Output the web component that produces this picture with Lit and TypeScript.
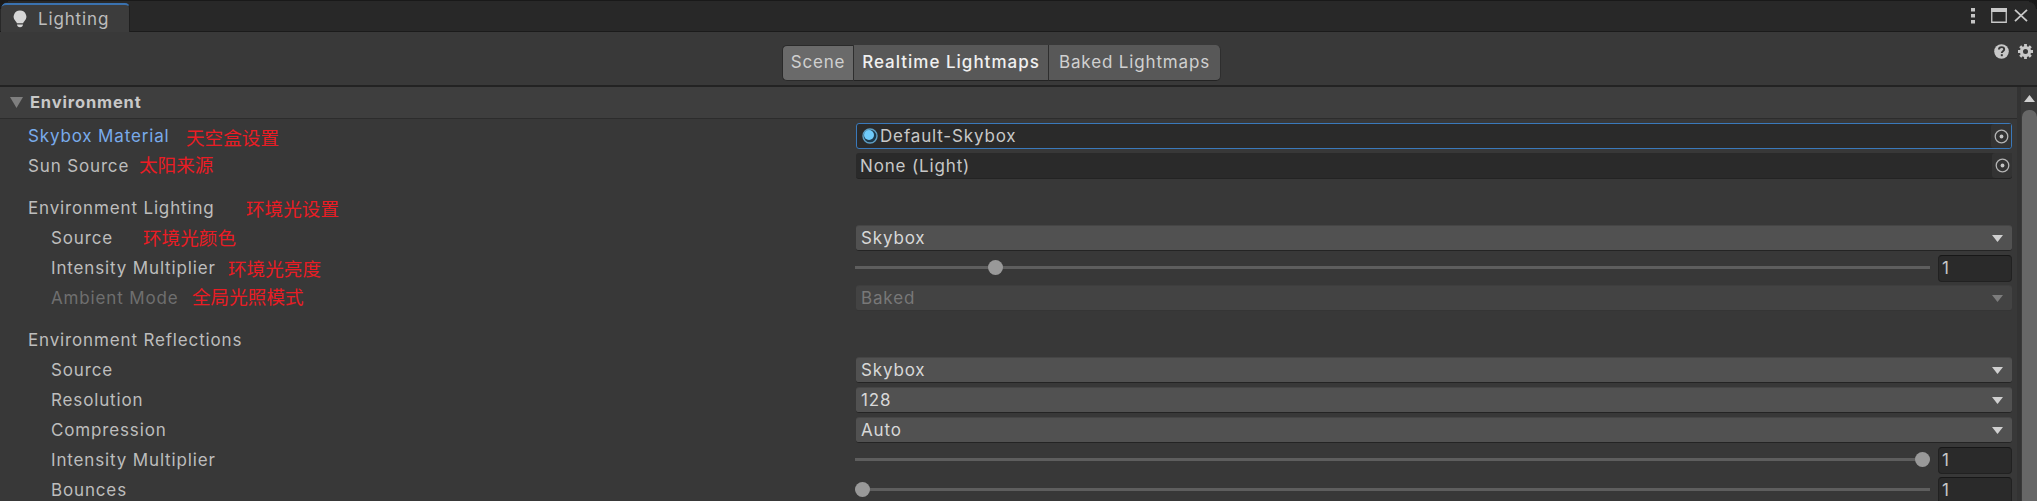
import { LitElement, html, css } from "lit";
import { customElement } from "lit/decorators.js";

type Row = {
  label: string;
  indent?: boolean;
  dim?: boolean;
  blue?: boolean;
  note?: string;
  noteX?: number;
  noteDy?: number;
  kind?: "object" | "select" | "slider" | "none";
  value?: string;
  pos?: number;
  focus?: boolean;
  gap?: boolean;
};

const rows: Row[] = [
  { label: "Skybox Material", blue: true, note: "天空盒设置", noteX: 186, noteDy: 1, kind: "object", value: "Default-Skybox", focus: true },
  { label: "Sun Source", note: "太阳来源", noteX: 139, noteDy: -2, kind: "object", value: "None (Light)" },
  { label: "Environment Lighting", note: "环境光设置", noteX: 246, noteDy: 0, kind: "none", gap: true },
  { label: "Source", indent: true, note: "环境光颜色", noteX: 143, noteDy: -1, kind: "select", value: "Skybox" },
  { label: "Intensity Multiplier", indent: true, note: "环境光亮度", noteX: 228, noteDy: 0, kind: "slider", pos: 140 },
  { label: "Ambient Mode", indent: true, dim: true, note: "全局光照模式", noteX: 192, noteDy: -2, kind: "select", value: "Baked" },
  { label: "Environment Reflections", kind: "none", gap: true },
  { label: "Source", indent: true, kind: "select", value: "Skybox" },
  { label: "Resolution", indent: true, kind: "select", value: "128" },
  { label: "Compression", indent: true, kind: "select", value: "Auto" },
  { label: "Intensity Multiplier", indent: true, kind: "slider", pos: 1067.5 },
  { label: "Bounces", indent: true, kind: "slider", pos: 7 },
];

@customElement("app-root")
export class AppRoot extends LitElement {
  static styles = css`
    :host {
      display: block;
      width: 2037px;
      height: 501px;
      overflow: hidden;
      background: #383838;
      font-family: Inter, "Noto Sans", sans-serif;
      font-size: 17px;
      letter-spacing: 0.85px;
      color: #bdbdbd;
      position: relative;
    }
    .tabbar {
      height: 32px;
      box-sizing: border-box;
      background: #282828;
      border-top: 1px solid #191919;
      border-bottom: 1px solid #1b1b1b;
      display: flex;
      align-items: flex-end;
      position: relative;
    }
    .tab {
      width: 129px;
      margin-left: 1px;
      height: 29px;
      box-sizing: border-box;
      background: #3c3c3c;
      border-top: 2px solid #3a72b0;
      border-radius: 5px 5px 0 0;
      border-right: 1px solid #1f1f1f;
      display: flex;
      align-items: center;
      gap: 11px;
      padding-left: 12px;
      margin-bottom: -1px;
    }
    .win {
      margin-left: auto;
      display: flex;
      align-items: center;
      height: 31px;
      padding-right: 9px;
      gap: 7px;
    }
    .corner {
      position: absolute;
      top: 0;
      width: 8px;
      height: 8px;
      box-sizing: border-box;
      border-top: 1px solid #191919;
    }
    .cl {
      left: 0;
      border-left: 1px solid #191919;
      border-top-left-radius: 8px;
      box-shadow: -4px -4px 0 4px #191919;
    }
    .cr {
      right: 0;
      border-right: 1px solid #191919;
      border-top-right-radius: 8px;
      box-shadow: 4px -4px 0 4px #191919;
    }
    .toolbar {
      height: 55px;
      box-sizing: border-box;
      border-bottom: 2px solid #232323;
      display: flex;
      align-items: flex-start;
      justify-content: center;
      position: relative;
      background: #393939;
    }
    .btns {
      display: flex;
      margin-top: 13px;
      margin-left: -34px;
      height: 36px;
    }
    .btn {
      height: 36px;
      box-sizing: border-box;
      background: #585858;
      border-bottom: 1px solid #232323;
      border-right: 1px solid #2e2e2e;
      display: flex;
      align-items: center;
      justify-content: center;
      padding-bottom: 2px;
      color: #d0d0d0;
    }
    .b1 {
      width: 72px;
      background: #6a6a6a;
      border-radius: 5px 0 0 5px;
      border: 1px solid #2a2a2a;
      border-right: 1px solid #2e2e2e;
    }
    .b2 {
      width: 195px;
      font-weight: 500;
      color: #f0f0f0;
      letter-spacing: 1px;
    }
    .b3 {
      width: 172px;
      border-radius: 0 5px 5px 0;
    }
    .tools {
      position: absolute;
      right: 4px;
      top: 12px;
      display: flex;
      gap: 9px;
      align-items: center;
    }
    .body {
      display: flex;
      height: 414px;
    }
    .main {
      flex: 1;
      min-width: 0;
    }
    .section {
      height: 32px;
      box-sizing: border-box;
      background: #3e3e3e;
      border-bottom: 1px solid #2c2c2c;
      display: flex;
      align-items: center;
      padding-left: 10px;
      gap: 7px;
      font-weight: 700;
      font-size: 16.5px;
      color: #c8c8c8;
    }
    .section span {
      margin-bottom: 2px;
    }
    .rows {
      padding-top: 2px;
    }
    .row {
      height: 30px;
      display: flex;
      align-items: center;
      position: relative;
    }
    .gap {
      margin-top: 12px;
    }
    .label {
      width: 856px;
      box-sizing: border-box;
      padding-left: 28px;
      flex: none;
      white-space: nowrap;
    }
    .indent {
      padding-left: 51px;
    }
    .dim {
      color: #6f6f6f;
    }
    .blue {
      color: #79abeb;
    }
    .note {
      position: absolute;
      top: 0;
      line-height: 30px;
      font-family: "Noto Sans CJK SC", sans-serif;
      font-size: 18.6px;
      letter-spacing: 0;
      color: #ea1c24;
      white-space: nowrap;
    }
    .ctl {
      width: 1156px;
      flex: none;
      box-sizing: border-box;
    }
    .obj {
      height: 26px;
      background: #2a2a2a;
      border-radius: 3px;
      border-bottom: 1px solid #232323;
      display: flex;
      align-items: center;
      box-sizing: border-box;
      padding-left: 4px;
      position: relative;
      gap: 2px;
      color: #c8c8c8;
    }
    .focus {
      border: 1px solid #3a79bb;
      padding-left: 5px;
    }
    .pick {
      position: absolute;
      right: 0;
      top: 0;
      bottom: 0;
      width: 20px;
      background: #333333;
      border-radius: 3px 0 3px 3px;
      display: flex;
      align-items: center;
      justify-content: center;
    }
    .sel {
      height: 26px;
      box-sizing: border-box;
      background: #515151;
      border-radius: 3px;
      border-top: 1px solid #454545;
      border-bottom: 1px solid #242424;
      display: flex;
      align-items: center;
      justify-content: space-between;
      padding: 0 9px 0 5px;
      color: #d8d8d8;
    }
    .sel.off {
      background: #434343;
      border-top-color: #3e3e3e;
      border-bottom-color: #353535;
      color: #787878;
    }
    .slider {
      display: flex;
      align-items: center;
      gap: 8px;
      height: 30px;
    }
    .track {
      width: 1075px;
      height: 3px;
      margin-left: -1px;
      margin-bottom: 2px;
      background: #5e5e5e;
      position: relative;
      flex: none;
    }
    .thumb {
      position: absolute;
      top: -6px;
      width: 15px;
      height: 15px;
      margin-left: -7.5px;
      border-radius: 50%;
      background: #999999;
    }
    .num {
      width: 75px;
      height: 27px;
      box-sizing: border-box;
      background: #2a2a2a;
      border: 1px solid #212121;
      border-top-color: #171717;
      border-radius: 4px;
      display: flex;
      align-items: center;
      padding-left: 3px;
      color: #c8c8c8;
    }
    .sb {
      width: 20px;
      flex: none;
      background: #3a3a3a;
      border-left: 4px solid #333333;
      box-sizing: border-box;
      display: flex;
      flex-direction: column;
      align-items: center;
    }
    .up {
      margin-top: 8px;
      height: 15px;
      display: flex;
    }
    .thumbv {
      flex: 1;
      width: 15px;
      background: #676767;
      border-radius: 7px 7px 0 0;
    }
  `;

  private arrow(fill: string) {
    return html`<svg width="11" height="7" viewBox="0 0 11 7"><path d="M0 0H11L5.5 7Z" fill=${fill}></path></svg>`;
  }

  private control(r: Row) {
    if (r.kind === "object") {
      return html`<div class="ctl obj ${r.focus ? "focus" : ""}">
        ${r.focus
          ? html`<svg width="16" height="16" viewBox="0 0 16 16">
              <circle cx="8" cy="8" r="7" fill="#1d3a4d" stroke="#5f9fc4" stroke-width="1.4"></circle>
              <circle cx="7" cy="7" r="5" fill="#6fcbfb"></circle>
            </svg>`
          : ""}
        <span>${r.value}</span>
        <div class="pick">
          <svg width="15" height="15" viewBox="0 0 15 15">
            <circle cx="7.5" cy="7.5" r="6.3" fill="none" stroke="#b4b4b4" stroke-width="1.3"></circle>
            <circle cx="7.5" cy="7.5" r="1.9" fill="#c4c4c4"></circle>
          </svg>
        </div>
      </div>`;
    }
    if (r.kind === "select") {
      return html`<div class="ctl sel ${r.dim ? "off" : ""}">
        <span>${r.value}</span>${this.arrow(r.dim ? "#7c7c7c" : "#d0d0d0")}
      </div>`;
    }
    if (r.kind === "slider") {
      return html`<div class="ctl slider">
        <div class="track"><div class="thumb" style="left:${r.pos}px"></div></div>
        <div class="num">1</div>
      </div>`;
    }
    return html`<div class="ctl"></div>`;
  }

  render() {
    return html`
      <div class="tabbar">
        <div class="tab">
          <svg width="14" height="18" viewBox="0 0 14 18">
            <path d="M7 0.5a6.3 6.3 0 0 1 4 11.2c-.6.5-.8 1-.8 1.6H3.8c0-.6-.2-1.1-.8-1.6A6.3 6.3 0 0 1 7 .5Z" fill="#d6d6d6"></path>
            <path d="M4 14.4h6c0 1.6-1.3 2.8-3 2.8s-3-1.2-3-2.8Z" fill="#d6d6d6"></path>
          </svg>
          <span>Lighting</span>
        </div>
        <div class="win">
          <svg width="4" height="16" viewBox="0 0 4 16">
            <rect x="0" y="0" width="4" height="3.5" fill="#c4c4c4"></rect>
            <rect x="0" y="6" width="4" height="3.5" fill="#c4c4c4"></rect>
            <rect x="0" y="12" width="4" height="3.5" fill="#c4c4c4"></rect>
          </svg>
          <svg style="margin-left:9px" width="16" height="15" viewBox="0 0 16 15">
            <path d="M.75.75H15.25V14.25H.75Z" fill="none" stroke="#c8c8c8" stroke-width="1.3"></path>
            <rect x="0" y="0" width="16" height="4" fill="#c8c8c8"></rect>
          </svg>
          <svg width="14" height="13" viewBox="0 0 14 13">
            <path d="M1 .8 13 12.2M13 .8 1 12.2" stroke="#c8c8c8" stroke-width="1.8" fill="none"></path>
          </svg>
        </div>
        <div class="corner cl"></div>
        <div class="corner cr"></div>
      </div>
      <div class="toolbar">
        <div class="btns">
          <div class="btn b1">Scene</div>
          <div class="btn b2">Realtime Lightmaps</div>
          <div class="btn b3">Baked Lightmaps</div>
        </div>
        <div class="tools">
          <svg width="15" height="15" viewBox="0 0 15 15">
            <circle cx="7.5" cy="7.5" r="7.3" fill="#c8c8c8"></circle>
            <path d="M4.9 5.6c0-1.600 1.200-2.500 2.700-2.500s2.600.9 2.600 2.200c0 1.900-2.400 1.800-2.400 3.600" fill="none" stroke="#393939" stroke-width="1.900"></path>
            <rect x="6.800" y="10.200" width="2" height="2" fill="#393939"></rect>
          </svg>
          <svg width="15" height="15" viewBox="0 0 24 24">
            <circle cx="12" cy="12" r="6.500" fill="none" stroke="#c8c8c8" stroke-width="5"></circle>
            <path d="M12 0V24M0 12H24M3.500 3.500 20.500 20.500M20.500 3.500 3.500 20.500" stroke="#c8c8c8" stroke-width="4.500" stroke-dasharray="5 14 5" fill="none"></path>
          </svg>
        </div>
      </div>
      <div class="body">
        <div class="main">
          <div class="section">
            <svg width="13" height="11" viewBox="0 0 13 11"><path d="M0 0H13L6.500 11Z" fill="#7f7f7f"></path></svg>
            <span>Environment</span>
          </div>
          <div class="rows">
            ${rows.map(
              (r) => html`<div class="row ${r.gap ? "gap" : ""}">
                <div class="label ${r.indent ? "indent" : ""} ${r.dim ? "dim" : ""} ${r.blue ? "blue" : ""}">${r.label}</div>
                ${this.control(r)}
                ${r.note
                  ? html`<span class="note" style="left:${r.noteX}px;top:${r.noteDy}px">${r.note}</span>`
                  : ""}
              </div>`,
            )}
          </div>
        </div>
        <div class="sb">
          <div class="up">
            <svg width="11" height="7" viewBox="0 0 11 7"><path d="M0 7H11L5.500 0Z" fill="#d0d0d0"></path></svg>
          </div>
          <div class="thumbv"></div>
        </div>
      </div>
    `;
  }
}
